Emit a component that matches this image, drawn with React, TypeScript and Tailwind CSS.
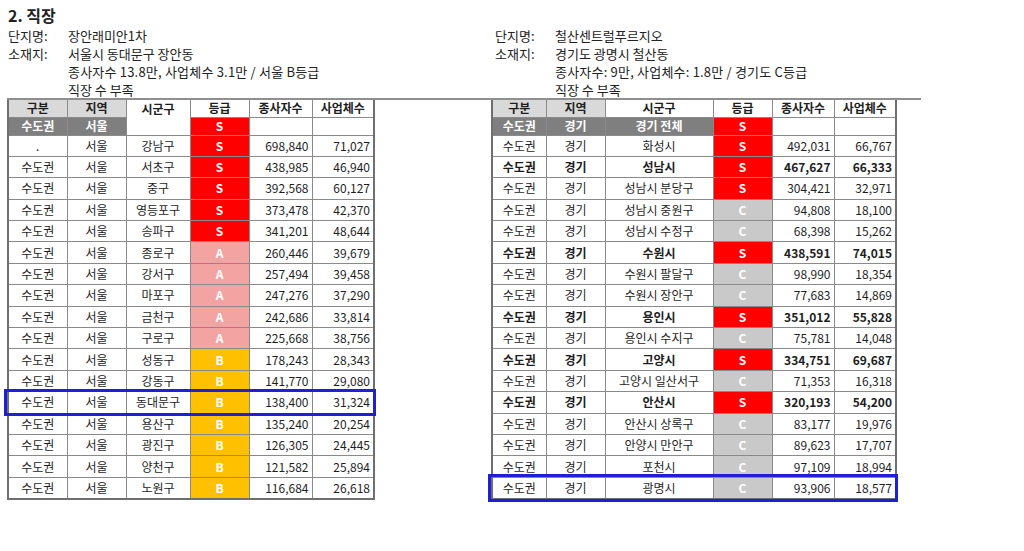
import React from 'react'

type Row = { g: string; r: string; s: string; grade: string; w: string; b: string; bold?: boolean }

const gradeBg: Record<string, string> = {
  S: 'bg-[#ff0000]',
  A: 'bg-[#f4a3a3]',
  B: 'bg-[#ffc000]',
  C: 'bg-[#c9c9c9]',
}

const seoul: Row[] = [
  { g: '.', r: '서울', s: '강남구', grade: 'S', w: '698,840', b: '71,027' },
  { g: '수도권', r: '서울', s: '서초구', grade: 'S', w: '438,985', b: '46,940' },
  { g: '수도권', r: '서울', s: '중구', grade: 'S', w: '392,568', b: '60,127' },
  { g: '수도권', r: '서울', s: '영등포구', grade: 'S', w: '373,478', b: '42,370' },
  { g: '수도권', r: '서울', s: '송파구', grade: 'S', w: '341,201', b: '48,644' },
  { g: '수도권', r: '서울', s: '종로구', grade: 'A', w: '260,446', b: '39,679' },
  { g: '수도권', r: '서울', s: '강서구', grade: 'A', w: '257,494', b: '39,458' },
  { g: '수도권', r: '서울', s: '마포구', grade: 'A', w: '247,276', b: '37,290' },
  { g: '수도권', r: '서울', s: '금천구', grade: 'A', w: '242,686', b: '33,814' },
  { g: '수도권', r: '서울', s: '구로구', grade: 'A', w: '225,668', b: '38,756' },
  { g: '수도권', r: '서울', s: '성동구', grade: 'B', w: '178,243', b: '28,343' },
  { g: '수도권', r: '서울', s: '강동구', grade: 'B', w: '141,770', b: '29,080' },
  { g: '수도권', r: '서울', s: '동대문구', grade: 'B', w: '138,400', b: '31,324' },
  { g: '수도권', r: '서울', s: '용산구', grade: 'B', w: '135,240', b: '20,254' },
  { g: '수도권', r: '서울', s: '광진구', grade: 'B', w: '126,305', b: '24,445' },
  { g: '수도권', r: '서울', s: '양천구', grade: 'B', w: '121,582', b: '25,894' },
  { g: '수도권', r: '서울', s: '노원구', grade: 'B', w: '116,684', b: '26,618' },
]

const gyeonggi: Row[] = [
  { g: '수도권', r: '경기', s: '화성시', grade: 'S', w: '492,031', b: '66,767' },
  { g: '수도권', r: '경기', s: '성남시', grade: 'S', w: '467,627', b: '66,333', bold: true },
  { g: '수도권', r: '경기', s: '성남시 분당구', grade: 'S', w: '304,421', b: '32,971' },
  { g: '수도권', r: '경기', s: '성남시 중원구', grade: 'C', w: '94,808', b: '18,100' },
  { g: '수도권', r: '경기', s: '성남시 수정구', grade: 'C', w: '68,398', b: '15,262' },
  { g: '수도권', r: '경기', s: '수원시', grade: 'S', w: '438,591', b: '74,015', bold: true },
  { g: '수도권', r: '경기', s: '수원시 팔달구', grade: 'C', w: '98,990', b: '18,354' },
  { g: '수도권', r: '경기', s: '수원시 장안구', grade: 'C', w: '77,683', b: '14,869' },
  { g: '수도권', r: '경기', s: '용인시', grade: 'S', w: '351,012', b: '55,828', bold: true },
  { g: '수도권', r: '경기', s: '용인시 수지구', grade: 'C', w: '75,781', b: '14,048' },
  { g: '수도권', r: '경기', s: '고양시', grade: 'S', w: '334,751', b: '69,687', bold: true },
  { g: '수도권', r: '경기', s: '고양시 일산서구', grade: 'C', w: '71,353', b: '16,318' },
  { g: '수도권', r: '경기', s: '안산시', grade: 'S', w: '320,193', b: '54,200', bold: true },
  { g: '수도권', r: '경기', s: '안산시 상록구', grade: 'C', w: '83,177', b: '19,976' },
  { g: '수도권', r: '경기', s: '안양시 만안구', grade: 'C', w: '89,623', b: '17,707' },
  { g: '수도권', r: '경기', s: '포천시', grade: 'C', w: '97,109', b: '18,994' },
  { g: '수도권', r: '경기', s: '광명시', grade: 'C', w: '93,906', b: '18,577' },
]

const cell = 'border border-[#8a8a8a] px-[3px] leading-none whitespace-nowrap'

function Info({ name, addr, line3 }: { name: string; addr: string; line3: string }) {
  return (
    <div className="text-[13px] leading-[18px] text-[#222] pl-[1px]">
      <div className="flex">
        <span className="w-[60px]">단지명:</span>
        <span>{name}</span>
      </div>
      <div className="flex">
        <span className="w-[60px]">소재지:</span>
        <span>{addr}</span>
      </div>
      <div className="pl-[60px] tracking-[0.2px]">{line3}</div>
      <div className="pl-[60px] h-[17px]">직장 수 부족</div>
    </div>
  )
}

function GradeTable({
  widths,
  topRow,
  rows,
  highlight,
}: {
  widths: number[]
  topRow: { g: string; r: string; s?: string }
  rows: Row[]
  highlight: number
}) {
  const total = widths.reduce((a, b) => a + b, 0)
  return (
    <div className="relative">
      <div className="h-[2px] bg-[#8f8f8f] w-[calc(100%+24px)]" />
      <table
        className="border-collapse table-fixed text-[12px] text-[#1e1e1e] border-x-2 border-b-2 border-[#6f6f6f]"
        style={{ width: total }}
      >
        <colgroup>
          {widths.map((w, i) => (
            <col key={i} style={{ width: w }} />
          ))}
        </colgroup>
        <thead>
          <tr className="h-[17px] font-semibold">
            <th className={`${cell} border-t-0 bg-[#d9d9d9] font-semibold`}>구분</th>
            <th className={`${cell} border-t-0 bg-[#d9d9d9] font-semibold`}>지역</th>
            <th className={`${cell} border-t-0 bg-white font-semibold ${topRow.s ? '' : 'border-b-0'}`}>시군구</th>
            <th className={`${cell} border-t-0 bg-white font-semibold`}>등급</th>
            <th className={`${cell} border-t-0 bg-white font-semibold`}>종사자수</th>
            <th className={`${cell} border-t-0 bg-white font-semibold`}>사업체수</th>
          </tr>
        </thead>
        <tbody>
          <tr className="h-[18px] font-bold">
            <td className={`${cell} text-center bg-[#7f7f7f] text-white`}>{topRow.g}</td>
            <td className={`${cell} text-center bg-[#7f7f7f] text-white`}>{topRow.r}</td>
            {topRow.s ? (
              <td className={`${cell} text-center bg-[#7f7f7f] text-white`}>{topRow.s}</td>
            ) : (
              <td className={`${cell} border-t-0 bg-white`} />
            )}
            <td className={`${cell} text-center bg-[#ff0000] text-white`}>S</td>
            <td className={`${cell} bg-white`} />
            <td className={`${cell} bg-white`} />
          </tr>
          {rows.map((row, i) => (
            <tr key={i} className={`h-[21.4px] ${row.bold ? 'font-bold' : ''}`}>
              <td className={`${cell} text-center`}>{row.g}</td>
              <td className={`${cell} text-center`}>{row.r}</td>
              <td className={`${cell} text-center`}>{row.s}</td>
              <td className={`${cell} text-center text-white font-semibold ${gradeBg[row.grade]}`}>{row.grade}</td>
              <td className={`${cell} text-right`}>{row.w}</td>
              <td className={`${cell} text-right`}>{row.b}</td>
            </tr>
          ))}
        </tbody>
      </table>
      <div
        className="absolute left-[-3px] border-[3px] border-[#1f1fd6] pointer-events-none"
        style={{ top: 2 + 17 + 18 + highlight * 21.4 - 3, width: total + 6, height: 21.4 + 6 }}
      />
    </div>
  )
}

export default function App() {
  return (
    <div
      className="w-[1024px] h-[551px] bg-white text-[#222] overflow-hidden"
      style={{ fontFamily: '"Noto Sans CJK KR", "Noto Sans", sans-serif' }}
    >
      <div className="pl-[8px] pt-[4px] text-[16px] font-bold leading-[23px]">2. 직장</div>
      <div className="flex pl-[7px]">
        <div className="w-[484px] shrink-0">
          <Info name="장안래미안1차" addr="서울시 동대문구 장안동" line3="종사자수 13.8만, 사업체수 3.1만 / 서울 B등급" />
          <GradeTable
            widths={[59, 59, 64, 59, 63, 62]}
            topRow={{ g: '수도권', r: '서울' }}
            rows={seoul}
            highlight={12}
          />
        </div>
        <div className="shrink-0">
          <div className="pl-[3px]">
            <Info name="철산센트럴푸르지오" addr="경기도 광명시 철산동" line3="종사자수: 9만, 사업체수: 1.8만 / 경기도 C등급" />
          </div>
          <GradeTable
            widths={[54, 59, 108, 59, 62, 62]}
            topRow={{ g: '수도권', r: '경기', s: '경기 전체' }}
            rows={gyeonggi}
            highlight={16}
          />
        </div>
      </div>
    </div>
  )
}
